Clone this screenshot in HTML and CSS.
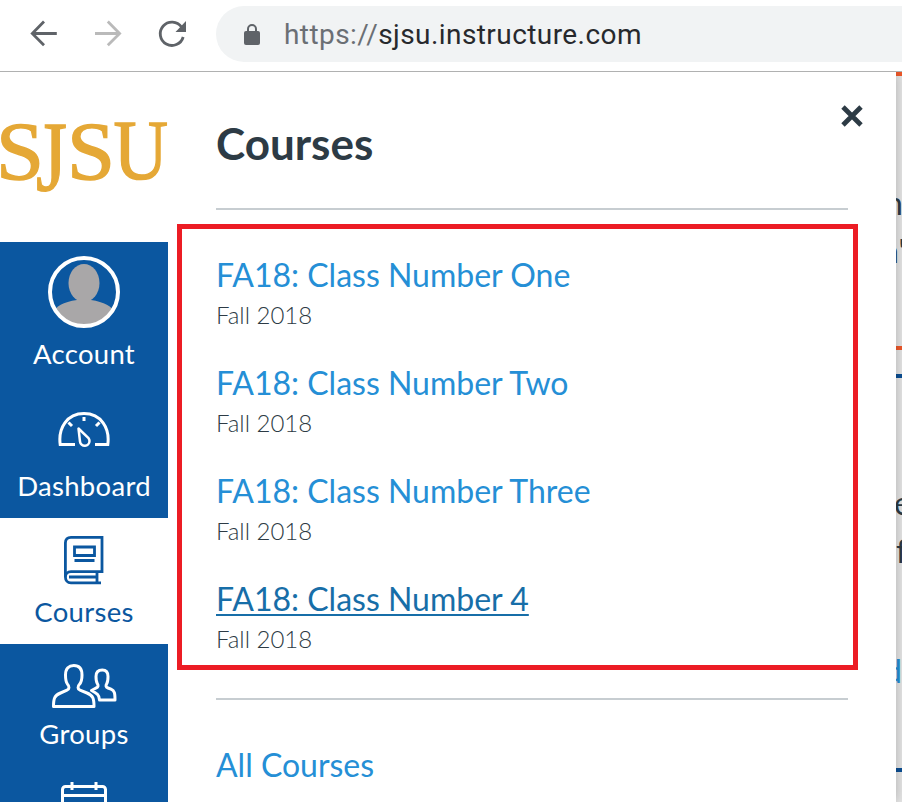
FILE: index.html
```html
<!DOCTYPE html>
<html lang="en">
<head>
<meta charset="utf-8">
<title>Courses</title>
<link rel="stylesheet" href="styles.css">
</head>
<body>
<header class="toolbar">
  <svg class="controls" width="216" height="71" viewBox="0 0 216 71" fill="none" stroke="#5f6368" stroke-width="2.8">
    <path d="M56.8 33.5H32.5M44 21.6 32.3 33.5 44 45.2"/>
    <path stroke="#bababa" d="M95 33.5h24.5M107.8 21.6l11.8 11.9-11.8 11.7"/>
    <path d="M181.5 27A11.7 11.7 0 1 0 183.2 37"/>
    <path fill="#5f6368" stroke="none" d="M186 21v11h-10.5z"/>
  </svg>
  <div class="address">
    <svg class="lock" width="16" height="22" viewBox="0 0 16 22"><rect y="7" width="16" height="14" rx="2" fill="#5f6368"/><path d="M4 8V5a4 4 0 0 1 8 0v3" fill="none" stroke="#5f6368" stroke-width="2"/></svg>
    <span class="url"><span class="scheme">https://</span>sjsu.instructure.com</span>
  </div>
</header>
<div class="page">
  <nav class="sidebar">
    <svg class="logo" width="168" height="170" viewBox="0 72 168 170" fill="#e5a836" stroke="#e5a836" stroke-width="1.4">
      <text x="-4" y="178.500" font-size="83" textLength="48" lengthAdjust="spacingAndGlyphs">S</text>
      <text x="36" y="189.500" font-size="100" textLength="31" lengthAdjust="spacingAndGlyphs">J</text>
      <text x="67" y="178.500" font-size="83" textLength="48" lengthAdjust="spacingAndGlyphs">S</text>
      <text x="113.500" y="178.500" font-size="84" textLength="54.500" lengthAdjust="spacingAndGlyphs">U</text>
    </svg>
    <a class="item account">
      <svg width="72" height="72" viewBox="0 0 72 72"><defs><clipPath id="face"><circle cx="36" cy="36" r="33"/></clipPath></defs><g clip-path="url(#face)" fill="#a9a7a8"><ellipse cx="36" cy="27" rx="15.5" ry="19"/><path d="M29 40v4C15 46 8 50 4 58v14h64V58c-4-8-12-12-25-14v-4z"/></g><circle cx="36" cy="36" r="34" fill="none" stroke="#fff" stroke-width="4"/></svg>
      <span class="label">Account</span>
    </a>
    <a class="item dashboard">
      <svg width="54" height="38" viewBox="0 0 54 38" fill="none" stroke="#fff" stroke-width="3"><path d="M18 34.5H3.2C1 18 10 3.5 27 3.5S53 18 50.800 34.500H38"/><path d="M21.500 18.500l1.500 13c.7 6 9.500 5.500 9.500-.5 0-1-.5-2-1-2.800z" stroke-width="2.500" stroke-linejoin="round"/><path d="M27 7v4M11.500 12.500l3.500 3.500M42.500 12.500L39 16"/></svg>
      <span class="label">Dashboard</span>
    </a>
    <a class="item active">
      <svg width="42" height="50" viewBox="0 0 42 50" fill="none" stroke="#0b57a0" stroke-width="2.800"><path d="M2.400 42V8c0-4 2-5.600 5.600-5.600h31v34.200H8c-7.400 0-7.400 11.200 0 11.200h30"/><path d="M6 42h28M34 37v11M11.500 25.500h20"/><path d="M11.500 12h20v8.500h-20z"/></svg>
      <span class="label">Courses</span>
    </a>
    <a class="item groups">
      <svg width="66" height="46" viewBox="0 0 66 46" fill="none" stroke="#fff" stroke-width="3" stroke-linejoin="round"><path d="M2.500 43.500c0-8 1-11 7-13.500l6.500-2.800c2.500-1 2.500-4 .5-6C14.800 19 14.500 16 14.500 12c0-6.500 3.500-9.500 8.300-9.500S31 5.500 31 12c0 4-.3 7-2.500 9.200-2 2-2 5 .5 6l7 2.800c6 2.500 7 5.500 7 13.500z"/><path d="M40.500 27.500l4.500-2.500c2.500-1 2.500-2.500 1.300-4.500C45 18.500 45 16.500 45 13.500c0-4.500 2.300-6.500 6.300-6.500s5.700 2 5.700 6.500c0 3 0 5-1.200 7-1.200 2-1.200 3.500 1.200 4.500l3 1.200c3.500 1.500 4 3.500 4 10.800H48.500c0-5-3-7-8-9.500z"/></svg>
      <span class="label">Groups</span>
    </a>
    <a class="item calendar">
      <svg width="46" height="44" viewBox="0 0 46 44" fill="none" stroke="#fff" stroke-width="3"><rect x="1.500" y="4.500" width="43" height="38" rx="3"/><path d="M1 13.500h44M11 0v8M35 0v8"/></svg>
    </a>
  </nav>
  <main class="tray">
    <div class="heading"><h1>Courses</h1>
      <svg class="close" width="22" height="22" viewBox="0 0 22 22" stroke="#2d3b45" stroke-width="4.800"><path d="M2 2l18 18M20 2 2 20"/></svg>
    </div>
    <hr>
    <ul class="courses">
      <li><a>FA18: Class Number One</a><span>Fall 2018</span></li>
      <li><a>FA18: Class Number Two</a><span>Fall 2018</span></li>
      <li><a>FA18: Class Number Three</a><span>Fall 2018</span></li>
      <li><a class="hovered">FA18: Class Number 4</a><span>Fall 2018</span></li>
    </ul>
    <hr>
    <a class="all">All Courses</a>
  </main>
  <aside class="behind">
    <div class="notice"><span class="n1">n</span><span class="n2">n'</span></div>
    <div class="panel"><span class="p1">e</span><span class="p2">f</span><span class="p3">d</span></div>
  </aside>
</div>
</body>
</html>
```
FILE: styles.css
```css
* { box-sizing: border-box; }
body { margin: 0; width: 902px; height: 802px; overflow: hidden; background: #fff; font-family: Lato, sans-serif; color: #2d3b45; }
svg { display: block; flex: none; }
.toolbar { height: 72px; display: flex; border-bottom: 1px solid #b0b1b1; }
.address { flex: 1; height: 56px; margin-top: 6px; border-radius: 28px 0 0 28px; background: #f1f3f4; display: flex; align-items: center; padding-left: 28px; }
.lock { margin-top: 2px; }
.url { margin: 2px 0 0 24px; font: 28px/56px Roboto, sans-serif; color: #27292d; letter-spacing: 0.43px; white-space: nowrap; }
.scheme { color: #6b6f74; }
.page { display: flex; height: 730px; }
.sidebar { width: 168px; flex: none; display: flex; flex-direction: column; background: #0b57a0; overflow: hidden; }
.logo { background: #fff; font-family: "Liberation Serif", serif; }
.item { display: flex; flex-direction: column; align-items: center; flex: none; color: #fff; }
.label { font-size: 27.5px; line-height: 34px; letter-spacing: 0.3px; }
.account { height: 154px; padding-top: 14px; }
.account .label { margin-top: 9px; }
.dashboard { height: 122px; padding-top: 14px; }
.dashboard .label { margin-top: 21px; }
.active { height: 126px; padding-top: 17px; background: #fff; color: #0b57a0; }
.active .label { margin-top: 10px; }
.groups { height: 138px; padding-top: 19px; }
.groups .label { margin-top: 8px; }
.tray { width: 728px; flex: none; padding-left: 9px; position: relative; z-index: 1; background: #fff; box-shadow: 0 0 12px rgba(0,0,0,.25); clip-path: inset(0 -12px 0 0); }
.heading { height: 136px; display: flex; justify-content: space-between; padding: 33px 33px 0 39px; }
h1 { margin: 11px 0 0; font-size: 44px; line-height: 54px; }
hr { border: 0; height: 2px; margin: 0 48px 0 39px; background: #c7cdd1; }
.courses { list-style: none; margin: 14px 0 28px; width: 681px; height: 446px; padding: 27px 0 0 34px; border: 5px solid #ec1c24; }
.courses li { height: 108px; }
.courses a, .all { display: block; font-size: 32px; line-height: 38px; letter-spacing: 0; color: #258fd6; width: max-content; }
.courses a.hovered { color: #176ea8; text-decoration: underline; text-decoration-thickness: 2px; text-underline-offset: 3px; text-decoration-skip-ink: none; }
.courses span { display: block; margin-top: 5px; font-size: 24px; line-height: 32px; font-weight: 300; letter-spacing: 0; }
.all { margin: 46px 0 0 39px; }
.behind { width: 6px; overflow: hidden; background: #e6e6e6; font-size: 32px; }
.behind span { display: block; height: 48px; line-height: 48px; white-space: nowrap; }
.notice { height: 278px; border-top: 4px solid #f0592a; border-bottom: 4px solid #f0592a; padding-top: 103px; }
.n1 { margin-left: -11px; }
.n2 { margin-left: -15px; }
.panel { margin-top: 24px; height: 398px; border-top: 4px solid #0b4f94; border-bottom: 4px solid #0b4f94; padding-top: 101px; }
.p1 { margin-left: -2px; }
.panel .p3 { margin: 72px 0 0 -12px; color: #258fd6; }
```
